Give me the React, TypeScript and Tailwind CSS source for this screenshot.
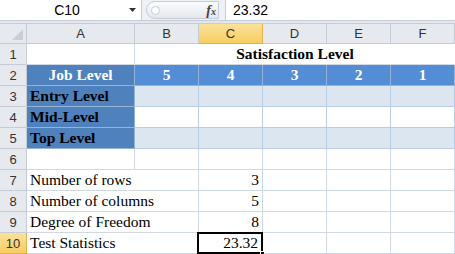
import React from 'react';

const cols = ['A', 'B', 'C', 'D', 'E', 'F'];
const serif = "font-['Liberation_Serif','Times_New_Roman',serif]";
const sans = "font-['Liberation_Sans',Arial,sans-serif]";

const levels = ['Entry Level', 'Mid-Level', 'Top Level'];
const stats: [string, string][] = [
  ['Number of rows', '3'],
  ['Number of columns', '5'],
  ['Degree of Freedom', '8'],
  ['Test Statistics', '23.32'],
];

function RowHead({ n, active = false }: { n: number; active?: boolean }) {
  return (
    <div
      className={`flex items-center justify-center border-r border-b text-[13px] leading-none ${sans} ${
        active
          ? 'bg-gradient-to-b from-[#fbe29a] to-[#f6cd5f] border-[#e2b24a] text-[#333]'
          : 'bg-[#e6e9ee] border-[#c5ccd6] text-[#333]'
      }`}
    >
      {n}
    </div>
  );
}

export default function App() {
  return (
    <div className="w-[455px] h-[254px] overflow-hidden bg-white select-none">
      {/* Formula bar */}
      <div className={`flex h-[21px] border-b border-[#c6cdd6] ${sans}`}>
        <div className="w-[142px] flex items-center border-r border-[#c6cdd6]">
          <span className="flex-1 text-center text-[14px] text-black pl-[5px]">C10</span>
          <svg width="8" height="5" viewBox="0 0 8 5" className="mr-[4px]">
            <path d="M0 0h7L3.5 4z" fill="#333" />
          </svg>
        </div>
        <div className="w-[83px] flex items-center bg-[#eef1f5] pl-[4px] pr-[6px]">
          <div className="flex-1 h-[18px] flex items-center rounded-l-full border border-[#c6cdd6] bg-gradient-to-b from-[#fbfcfd] to-[#e3e8ee] pl-[4px]">
            <span className="w-[9px] h-[9px] rounded-full border border-[#c6cdd6] bg-white"></span>
            <span className={`ml-auto mr-[2px] text-[14px] italic font-bold text-[#444] ${serif}`}>
              f<span className="text-[10px]">x</span>
            </span>
          </div>
        </div>
        <div className="flex-1 flex items-center border-l border-[#c6cdd6] pl-[7px] text-[14px] text-black">
          23.32
        </div>
      </div>
      <div className="h-[3px] bg-[#e3e7ed] border-b border-[#c6cdd6]"></div>

      {/* Sheet grid */}
      <div className="grid grid-cols-[27px_108px_64px_64px_64px_64px_64px] grid-rows-[20px_repeat(10,21px)] leading-none">
        {/* column headers */}
        <div className="bg-[#e6e9ee] border-r border-b border-[#c5ccd6] relative">
          <svg width="11" height="11" viewBox="0 0 11 11" className="absolute right-[3px] bottom-[3px]">
            <path d="M11 0V11H0z" fill="#c9ced6" />
          </svg>
        </div>
        {cols.map((c) => (
          <div
            key={c}
            className={`flex items-center justify-center border-r border-b text-[13px] ${sans} ${
              c === 'C'
                ? 'bg-gradient-to-b from-[#fbe29a] to-[#f6cd5f] border-[#e2b24a] text-[#333]'
                : 'bg-[#e6e9ee] border-[#c5ccd6] text-[#333]'
            }`}
          >
            {c}
          </div>
        ))}

        {/* row 1 */}
        <RowHead n={1} />
        <div className="border-r border-b border-[#d0d7e5]"></div>
        <div className={`col-span-5 flex items-center justify-center border-b border-[#d0d7e5] text-[15.5px] font-bold text-black ${serif}`}>
          Satisfaction Level
        </div>

        {/* row 2 */}
        <RowHead n={2} />
        <div className={`bg-[#4f81bd] border-r border-b border-[#95b3d7] flex items-center justify-center text-[15.5px] font-bold text-white ${serif}`}>
          Job Level
        </div>
        {['5', '4', '3', '2', '1'].map((v) => (
          <div
            key={v}
            className={`bg-[#538dd5] border-r border-b border-[#95b3d7] flex items-center justify-center text-[15.5px] font-bold text-white ${serif}`}
          >
            {v}
          </div>
        ))}

        {/* rows 3-5 */}
        {levels.map((lvl, i) => (
          <React.Fragment key={lvl}>
            <RowHead n={3 + i} />
            <div className={`bg-[#4f81bd] border-r border-b border-[#95b3d7] flex items-center pl-[3px] text-[15.5px] font-bold text-black ${serif}`}>
              {lvl}
            </div>
            {[0, 1, 2, 3, 4].map((k) => (
              <div
                key={k}
                className={`border-r border-b border-[#b8cce4] ${i === 1 ? 'bg-white' : 'bg-[#dce6f1]'}`}
              ></div>
            ))}
          </React.Fragment>
        ))}

        {/* row 6 */}
        <RowHead n={6} />
        {[0, 1, 2, 3, 4, 5].map((k) => (
          <div key={k} className="border-r border-b border-[#d0d7e5]"></div>
        ))}

        {/* rows 7-10 */}
        {stats.map(([label, val], i) => {
          const sel = i === 3;
          return (
            <React.Fragment key={label}>
              <RowHead n={7 + i} active={sel} />
              <div className={`col-span-2 flex items-center pl-[3px] border-r border-b border-[#d0d7e5] text-[15.5px] text-black whitespace-nowrap ${serif}`}>
                {label}
              </div>
              <div
                className={`relative flex items-center justify-end pr-[3px] text-[15.5px] text-black ${serif} ${
                  sel ? 'border-2 border-black -ml-[2px] -mt-[1px]' : 'border-r border-b border-[#d0d7e5]'
                }`}
              >
                {val}
                {sel && <span className="absolute -right-[4px] -bottom-[4px] w-[5px] h-[5px] bg-black border border-white"></span>}
              </div>
              {[0, 1, 2].map((k) => (
                <div key={k} className="border-r border-b border-[#d0d7e5]"></div>
              ))}
            </React.Fragment>
          );
        })}
      </div>
    </div>
  );
}
